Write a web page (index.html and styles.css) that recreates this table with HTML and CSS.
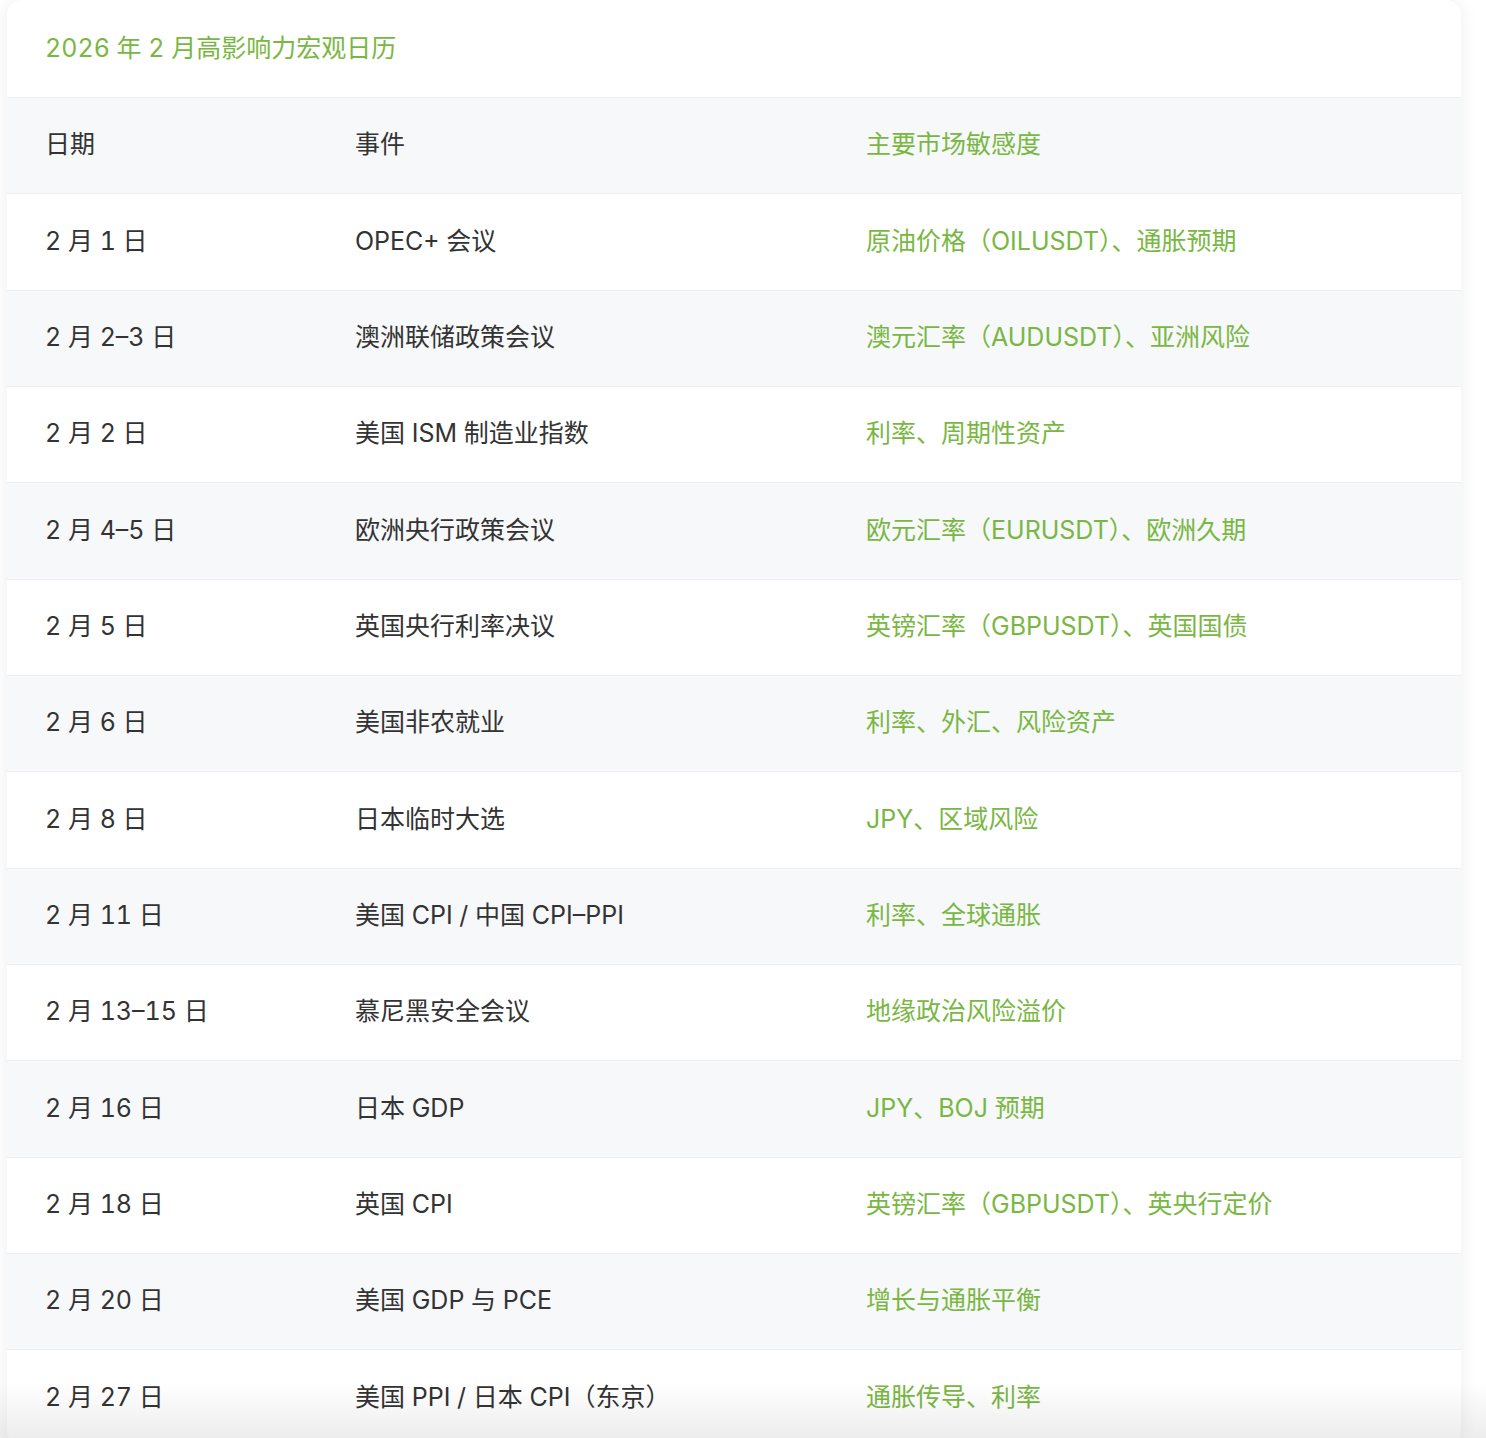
FILE: index.html
```html
<!DOCTYPE html>
<html lang="zh-CN">
<head>
<meta charset="utf-8">
<title>2026 年 2 月高影响力宏观日历</title>
<link rel="stylesheet" href="styles.css">
</head>
<body>
<div class="page">
  <section class="card">
    <h2 class="card-title">2026 年 2 月高影响力宏观日历</h2>
    <table class="cal">
      <thead>
        <tr>
          <th class="col-date">日期</th>
          <th class="col-event">事件</th>
          <th class="col-sens green">主要市场敏感度</th>
        </tr>
      </thead>
      <tbody>
        <tr><td>2 月 1 日</td><td>OPEC+ 会议</td><td class="green">原油价格（OILUSDT）、通胀预期</td></tr>
        <tr><td>2 月 2–3 日</td><td>澳洲联储政策会议</td><td class="green">澳元汇率（AUDUSDT）、亚洲风险</td></tr>
        <tr><td>2 月 2 日</td><td>美国 ISM 制造业指数</td><td class="green">利率、周期性资产</td></tr>
        <tr><td>2 月 4–5 日</td><td>欧洲央行政策会议</td><td class="green">欧元汇率（EURUSDT）、欧洲久期</td></tr>
        <tr><td>2 月 5 日</td><td>英国央行利率决议</td><td class="green">英镑汇率（GBPUSDT）、英国国债</td></tr>
        <tr><td>2 月 6 日</td><td>美国非农就业</td><td class="green">利率、外汇、风险资产</td></tr>
        <tr><td>2 月 8 日</td><td>日本临时大选</td><td class="green">JPY、区域风险</td></tr>
        <tr><td>2 月 11 日</td><td>美国 CPI / 中国 CPI–PPI</td><td class="green">利率、全球通胀</td></tr>
        <tr><td>2 月 13–15 日</td><td>慕尼黑安全会议</td><td class="green">地缘政治风险溢价</td></tr>
        <tr><td>2 月 16 日</td><td>日本 GDP</td><td class="green">JPY、BOJ 预期</td></tr>
        <tr><td>2 月 18 日</td><td>英国 CPI</td><td class="green">英镑汇率（GBPUSDT）、英央行定价</td></tr>
        <tr><td>2 月 20 日</td><td>美国 GDP 与 PCE</td><td class="green">增长与通胀平衡</td></tr>
        <tr><td>2 月 27 日</td><td>美国 PPI / 日本 CPI（东京）</td><td class="green">通胀传导、利率</td></tr>
      </tbody>
    </table>
  </section>
</div>
</body>
</html>
```

FILE: styles.css
```css
html, body {
  margin: 0;
  padding: 0;
  background: #ffffff;
}

body {
  font-family: Inter, "Noto Sans CJK SC", "Noto Sans", sans-serif;
  font-feature-settings: "tnum" 1;
  color: #333333;
  overflow: hidden;
}

body::after {
  content: "";
  position: fixed;
  left: 0;
  right: 0;
  bottom: 0;
  height: 56px;
  background: linear-gradient(to bottom, rgba(0, 0, 0, 0), rgba(0, 0, 0, 0.07));
  pointer-events: none;
}

.page {
  padding: 0 25px 40px 7px;
}

.card {
  background: #ffffff;
  border-radius: 15px;
  box-shadow: 0 0 18px rgba(0, 0, 0, 0.07);
  overflow: hidden;
}

.card-title {
  margin: 0;
  height: 97px;
  display: flex;
  align-items: center;
  padding: 0 0 6px 38px;
  font-size: 25px;
  font-weight: 400;
  color: #79b743;
  box-sizing: border-box;
}

.cal {
  width: 100%;
  border-collapse: collapse;
  table-layout: fixed;
  font-size: 25px;
}

.cal th,
.cal td {
  box-sizing: border-box;
  height: 96.35px;
  padding: 0 0 7px 38px;
  text-align: left;
  font-weight: 400;
  vertical-align: middle;
  border-top: 1px solid #edeff2;
  white-space: nowrap;
}

.cal thead tr {
  background: #f7f8fa;
}

.cal thead th {
  border-bottom: 1px solid #edeff2;
}

.col-date { width: 310px; }
.col-event { width: 511px; }

.cal tbody tr:nth-child(even) {
  background: #f7f8fa;
}

.green {
  color: #79b743;
}
```
